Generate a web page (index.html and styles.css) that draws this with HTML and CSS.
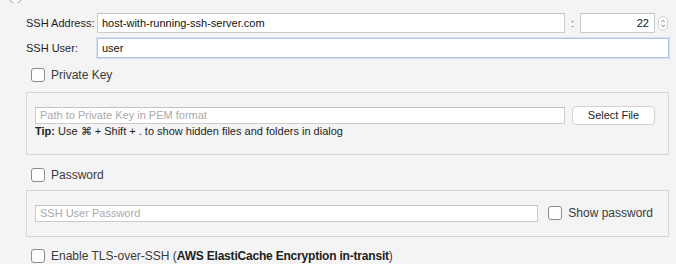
FILE: index.html
```html
<!DOCTYPE html>
<html lang="en">
<head>
    <meta charset="UTF-8">
    <meta name="viewport" content="width=device-width, initial-scale=1.0">
    <title>SSH Tunnel</title>
    <link rel="stylesheet" href="styles.css">
</head>
<body>
    <div class="radio-stub"><span></span></div>

    <div class="panel">
        <div class="field-row">
            <label class="field-label">SSH Address:</label>
            <input class="text-input address" type="text" value="host-with-running-ssh-server.com">
            <span class="colon">:</span>
            <input class="text-input port" type="text" value="22">
            <span class="stepper">
                <svg width="10" height="15" viewBox="0 0 10 15">
                    <rect x="0.5" y="0.5" width="9" height="14" rx="4.5" fill="#fff" stroke="#cfcfcf"/>
                    <path d="M3.3 6 L5 4.3 L6.7 6" fill="none" stroke="#666" stroke-width="0.9"/>
                    <path d="M3.3 9 L5 10.7 L6.7 9" fill="none" stroke="#666" stroke-width="0.9"/>
                </svg>
            </span>
        </div>

        <div class="field-row second">
            <label class="field-label">SSH User:</label>
            <input class="text-input user focused" type="text" value="user">
        </div>

        <label class="check-row key-row">
            <input class="check" type="checkbox">
            <span>Private Key</span>
        </label>

        <div class="group key-group">
            <div class="group-row">
                <input class="text-input inner" type="text" placeholder="Path to Private Key in PEM format">
                <button class="select-btn">Select File</button>
            </div>
            <p class="tip"><b>Tip:</b> Use &#8984; + Shift + . to show hidden files and folders in dialog</p>
        </div>

        <label class="check-row pass-row">
            <input class="check" type="checkbox">
            <span>Password</span>
        </label>

        <div class="group pass-group">
            <div class="group-row">
                <input class="text-input inner" type="password" placeholder="SSH User Password">
                <label class="show-pass">
                    <input class="check" type="checkbox">
                    <span>Show password</span>
                </label>
            </div>
        </div>

        <label class="check-row tls-row">
            <input class="check" type="checkbox">
            <span>Enable TLS-over-SSH (<b>AWS ElastiCache Encryption in-transit</b>)</span>
        </label>
    </div>
</body>
</html>
```

FILE: styles.css
```css
body {
    margin: 0;
    background-color: #f4f4f4;
    font-family: "Liberation Sans", Arial, sans-serif;
    color: #1e1e1e;
    overflow: hidden;
}

.radio-stub {
    height: 3px;
    overflow: hidden;
    padding-left: 9px;
}

.radio-stub span {
    display: block;
    width: 11px;
    height: 11px;
    margin-top: -9px;
    border: 1px solid #9a9a9a;
    border-radius: 50%;
    background: #fff;
}

.panel {
    padding: 10px 7px 0 26px;
}

.field-row {
    display: flex;
    align-items: center;
    height: 20px;
}

.field-row.second {
    margin-top: 5px;
}

.field-label {
    width: 71px;
    font-size: 11px;
    color: #1e1e1e;
}

.text-input {
    box-sizing: border-box;
    height: 20px;
    margin: 0;
    padding: 0 4px;
    border: 1px solid #cbcbcb;
    border-top-color: #c2c2c2;
    background: #fff;
    font-family: "Liberation Sans", Arial, sans-serif;
    font-size: 11px;
    color: #111;
    outline: none;
}

.text-input::placeholder {
    color: #a9a9a9;
}

.address {
    flex: 1;
    min-width: 0;
}

.colon {
    width: 15px;
    text-align: center;
    font-size: 11px;
    color: #555;
}

.port {
    width: 75px;
    text-align: right;
    padding-right: 5px;
}

.stepper {
    display: flex;
    margin-left: 3px;
    margin-right: 1px;
}

.user {
    flex: 1;
    min-width: 0;
}

.focused {
    border-color: #adc4ea;
    box-shadow: 0 0 0 1px #d5e1f4;
}

.check-row {
    display: flex;
    align-items: center;
    height: 16px;
    padding-left: 5px;
    font-size: 12px;
    color: #3b3b3b;
}

.key-row {
    margin-top: 9px;
}

.pass-row {
    margin-top: 12px;
}

.tls-row {
    margin-top: 11px;
}

.tls-row b {
    color: #1e1e1e;
    letter-spacing: -0.2px;
}

.check {
    -webkit-appearance: none;
    appearance: none;
    box-sizing: border-box;
    width: 14px;
    height: 14px;
    margin: 0 6px 0 0;
    border: 1px solid #8c8c8c;
    border-radius: 3px;
    background: #fff;
}

.group {
    box-sizing: border-box;
    border: 1px solid #d6d6d6;
    padding: 13px 13px 17px 8px;
}

.key-group {
    margin-top: 9px;
    height: 63px;
}

.pass-group {
    margin-top: 7px;
    height: 47px;
    padding: 13px 15px 14px 8px;
}

.group-row {
    display: flex;
    align-items: center;
    height: 18px;
}

.inner {
    flex: 1;
    min-width: 0;
    height: 17px;
}

.select-btn {
    box-sizing: border-box;
    width: 83px;
    height: 19px;
    margin-left: 7px;
    padding: 0;
    border: 1px solid #d2d2d2;
    border-radius: 4px;
    background: #fff;
    font-family: "Liberation Sans", Arial, sans-serif;
    font-size: 11px;
    color: #1e1e1e;
}

.tip {
    margin: 0;
    height: 13px;
    line-height: 14px;
    font-size: 11px;
    color: #1e1e1e;
}

.show-pass {
    display: flex;
    align-items: center;
    margin-left: 10px;
    font-size: 12px;
    color: #3b3b3b;
}
```
